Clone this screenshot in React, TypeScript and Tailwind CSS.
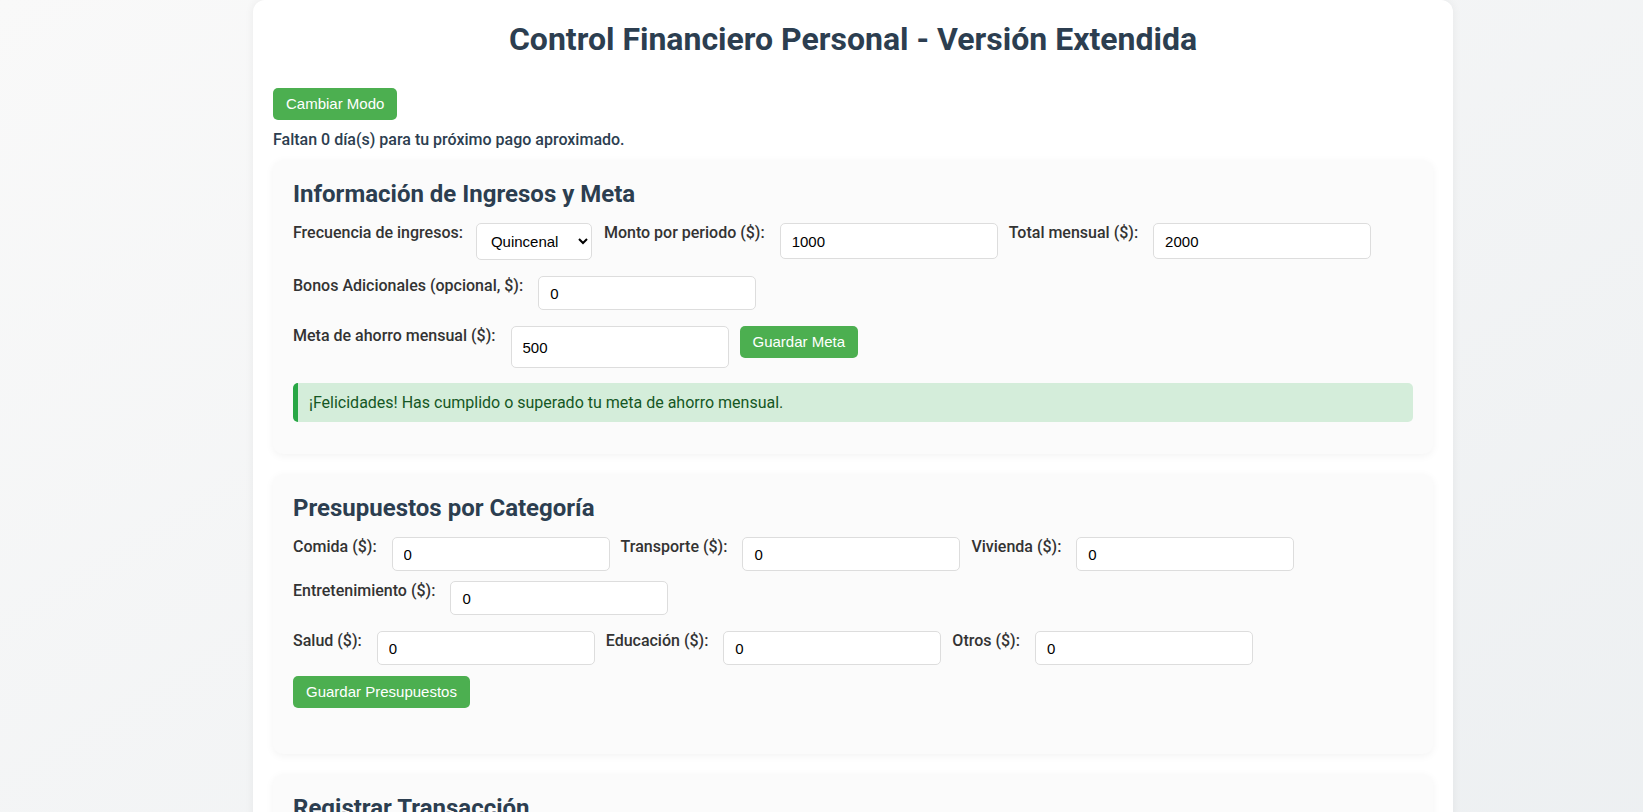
import { useState } from 'react';

const labelCls = "mr-[15px] text-[16px] leading-[19px] font-medium text-[#333] font-['Roboto',sans-serif]";
const inputCls =
  "box-border w-[218px] mr-[11px] mb-[10px] px-[11px] border border-[#ddd] rounded-[5px] bg-white text-[15px] text-black font-['Liberation_Sans',Arial,sans-serif] outline-none";
const btnCls =
  "px-[13px] h-[32px] rounded-[5px] bg-[#4CAF50] text-white text-[15px] font-['Liberation_Sans',Arial,sans-serif]";

function Field({ label, value, h = 'h-[34px]' }: { label: string; value: string; h?: string }) {
  const [v, setV] = useState(value);
  return (
    <>
      <label className={labelCls}>{label}</label>
      <input className={`${inputCls} ${h}`} value={v} onChange={(e) => setV(e.target.value)} />
    </>
  );
}

function Card({ title, children }: { title: string; children: React.ReactNode }) {
  return (
    <section className="mb-5 rounded-[10px] bg-[#fbfbfb] p-5 shadow-[0_2px_8px_rgba(0,0,0,0.05)]">
      <h2 className="mb-[15px] text-[24px] leading-[28px] font-bold text-[#2c3e50]">{title}</h2>
      {children}
    </section>
  );
}

export default function App() {
  const [freq, setFreq] = useState('quincenal');

  return (
    <div className="min-h-screen bg-linear-to-br from-[#f9f9f9] to-[#eceff1] font-['Roboto',sans-serif]">
      <div className="ml-[253px] w-[1200px] rounded-[12px] bg-white p-5 shadow-[0_0_10px_rgba(0,0,0,0.06)]">
        <h1 className="mb-[30px] text-center text-[32px] leading-[38px] font-bold text-[#2c3e50]">
          Control Financiero Personal - Versión Extendida
        </h1>

        <button className={btnCls}>Cambiar Modo</button>
        <p className="mt-[10px] mb-[11px] text-[16px] leading-[19px] font-medium text-[#2c3e50]">
          Faltan 0 día(s) para tu próximo pago aproximado.
        </p>

        <Card title="Información de Ingresos y Meta">
          <div className="mb-[6px] flex flex-wrap items-start">
            <label className="mr-[13px] text-[16px] leading-[19px] font-medium text-[#333]">Frecuencia de ingresos:</label>
            <select
              value={freq}
              onChange={(e) => setFreq(e.target.value)}
              className="mr-[12px] mb-[10px] box-border h-[37px] w-[116px] rounded-[5px] border border-[#ddd] bg-white px-[10px] text-[15px] font-['Liberation_Sans',Arial,sans-serif] text-black"
            >
              <option value="semanal">Semanal</option>
              <option value="quincenal">Quincenal</option>
              <option value="mensual">Mensual</option>
            </select>
            <Field label="Monto por periodo ($):" value="1000" h="h-[36px]" />
            <Field label="Total mensual ($):" value="2000" h="h-[36px]" />
          </div>
          <div className="mb-[6px] flex flex-wrap items-start">
            <Field label="Bonos Adicionales (opcional, $):" value="0" />
          </div>
          <div className="flex flex-wrap items-start">
            <Field label="Meta de ahorro mensual ($):" value="500" h="h-[42px]" />
            <button className={btnCls}>Guardar Meta</button>
          </div>
          <div className="mt-[5px] mb-[12px] rounded-[5px] border-l-[5px] border-[#28a745] bg-[#d4edda] py-[10px] pl-[11px] text-[16px] leading-[19px] text-[#155724]">
            ¡Felicidades! Has cumplido o superado tu meta de ahorro mensual.
          </div>
        </Card>

        <Card title="Presupuestos por Categoría">
          <div className="mb-[6px] flex flex-wrap items-start">
            <Field label="Comida ($):" value="0" />
            <Field label="Transporte ($):" value="0" />
            <Field label="Vivienda ($):" value="0" />
            <Field label="Entretenimiento ($):" value="0" />
          </div>
          <div className="flex flex-wrap items-start">
            <Field label="Salud ($):" value="0" />
            <Field label="Educación ($):" value="0" />
            <Field label="Otros ($):" value="0" />
          </div>
          <button className={`${btnCls} mt-px mb-[26px]`}>Guardar Presupuestos</button>
        </Card>

        <Card title="Registrar Transacción">
          <div className="mb-[6px] flex flex-wrap items-start">
            <Field label="Descripción:" value="" />
            <Field label="Monto ($):" value="" />
            <Field label="Fecha:" value="" />
          </div>
          <button className={btnCls}>Agregar Transacción</button>
        </Card>
      </div>
    </div>
  );
}
